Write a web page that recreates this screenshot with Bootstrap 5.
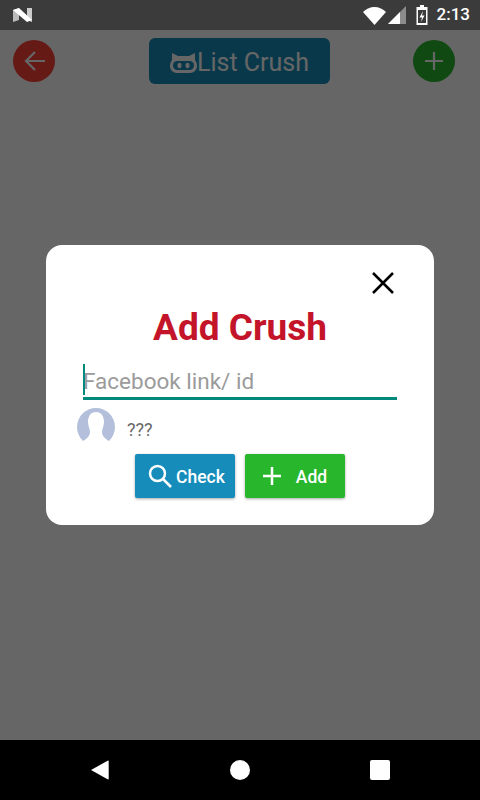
<!DOCTYPE html>
<html lang="en">
<head>
  <meta charset="UTF-8" />
  <meta name="viewport" content="width=device-width, initial-scale=1" />
  <title>Add Crush</title>
  <link href="https://cdn.jsdelivr.net/npm/bootstrap@5.3.0/dist/css/bootstrap.min.css" rel="stylesheet" />
  <style>
    html, body {
      height: 800px;
      overflow: hidden;
    }
    body {
      font-family: Roboto, "Liberation Sans", sans-serif;
      background: #000;
    }
    .status-strip {
      height: 30px;
      background: #3b3b3b;
      color: #fff;
      padding: 0 10px 0 13px;
      font-size: 17px;
      font-weight: 500;
    }
    .wifi-gap { margin-left: 2px; }
    .battery-gap { margin-left: 10px; }
    .clock-gap { margin-left: 9px; }
    .app-area {
      height: 710px;
      background: #fff;
    }
    .top-strip {
      padding: 8px 25px 0 13px;
    }
    .round-btn {
      width: 42px;
      height: 42px;
      margin-top: 2px;
      border-radius: 50%;
      border: 0;
      padding: 0;
    }
    .round-red { background: #ff4136; }
    .round-green { background: #28b62c; }
    .list-btn {
      width: 181px;
      height: 46px;
      margin-left: 11px;
      background: #158cba;
      color: #fff;
      font-size: 25px;
      border-radius: 6px;
      border: 0;
      padding: 3px 0 0;
    }
    .dim-layer {
      position: absolute;
      inset: 30px 0 60px 0;
      background: rgba(0, 0, 0, .6);
    }
    .crush-dialog {
      width: 388px;
      height: 280px;
      background: #fff;
      border-radius: 16px;
      padding: 27px 37px 0;
    }
    .close-mark {
      margin-right: 3px;
    }
    .crush-title {
      color: #c3142a;
      font-size: 37px;
      font-weight: 700;
      line-height: 42px;
      margin-top: 13px;
    }
    .crush-field {
      margin-top: 13px;
      height: 38px;
      border-bottom: 3px solid #00897b;
      font-size: 22.5px;
      line-height: 38px;
      color: #9b9b9b;
    }
    .caret-mark {
      width: 2px;
      height: 31px;
      background: #00897b;
      margin: 2px -2px 0 0;
      flex-shrink: 0;
    }
    .who-row {
      margin: 8px 0 0 -6px;
      height: 38px;
      color: #666;
      font-size: 18px;
      gap: 12px;
    }
    .who-name {
      padding-top: 4px;
    }
    .action-btn {
      width: 100px;
      height: 44px;
      border: 0;
      border-radius: 2px;
      color: #fff;
      font-size: 17.500px;
      font-weight: 500;
      padding: 0;
      box-shadow: 0 1px 3px rgba(0, 0, 0, .35);
    }
    .action-btn span {
      padding-top: 2px;
    }
    .action-blue { background: #158cba; padding-left: 3px; }
    .action-green { background: #28b62c; }
    .plus-gap { margin-right: 15px; }
    .action-gap {
      gap: 10px;
    }
    .nav-strip {
      height: 60px;
      background: #000;
      gap: 120px;
    }
  </style>
</head>
<body class="position-relative">
  <div class="status-strip d-flex align-items-center justify-content-between">
    <svg width="20" height="16" viewBox="0 0 20 16">
      <path d="M0 3l6-2v12l-6 2z" fill="#bbb"/>
      <path d="M14 1l5 0v14l-5-2z" fill="#ccc"/>
      <path d="M0 3l6-2 13 12-5 2z" fill="#fff"/>
    </svg>
    <div class="d-flex align-items-center">
      <svg width="23" height="19" viewBox="0 0 23 19">
        <path d="M0 6C3 3 7 1 11.500 1S20 3 23 6L11.500 19z" fill="#fff"/>
      </svg>
      <svg class="wifi-gap" width="18" height="18" viewBox="0 0 18 18">
        <path d="M0 18L18 0v18z" fill="#8c8c8c"/>
        <path d="M0 18L12 6v12z" fill="#fff"/>
      </svg>
      <svg class="battery-gap" width="12" height="20" viewBox="0 0 12 20">
        <path d="M4 0h4v2h3.500v18H.5V2H4z" fill="#fff"/>
        <path d="M2 5h8v13H2z" fill="#3b3b3b"/>
        <path d="M7 6L3.500 12.500H6L5 17l3.500-6.500H6z" fill="#fff"/>
      </svg>
      <span class="clock-gap">2:13</span>
    </div>
  </div>

  <div class="app-area">
    <div class="top-strip d-flex align-items-start justify-content-between">
      <button class="round-btn round-red d-flex align-items-center justify-content-center" type="button">
        <svg width="21" height="22" viewBox="0 0 21 22" fill="none" stroke="#fff" stroke-width="2.200">
          <path d="M21 11H2M11 2l-9 9 9 9"/>
        </svg>
      </button>
      <button class="list-btn d-flex align-items-center justify-content-center" type="button">
        <svg width="27" height="20" viewBox="0 0 27 20">
          <path d="M2 0l6 3h11l6-3v7c1 1.500 2 3 2 6 0 4-3 7-7 7H7c-4 0-7-3-7-7 0-3 1-4.500 2-6z" fill="#fff"/>
          <rect x="3" y="8" width="21" height="9" rx="4.500" fill="#158cba"/>
          <ellipse cx="9.500" cy="12.500" rx="2" ry="2.800" fill="#fff"/>
          <ellipse cx="17.500" cy="12.500" rx="2" ry="2.800" fill="#fff"/>
        </svg>
        <span>List Crush</span>
      </button>
      <button class="round-btn round-green d-flex align-items-center justify-content-center" type="button">
        <svg width="18" height="18" viewBox="0 0 18 18" fill="none" stroke="#fff" stroke-width="2.200">
          <path d="M9 0v18M0 9h18"/>
        </svg>
      </button>
    </div>
  </div>

  <div class="nav-strip d-flex align-items-center justify-content-center">
    <svg width="20" height="20" viewBox="0 0 20 20"><path d="M1 10L18 .5c.5 0 .7.300.7 1v17c0 .7-.2 1-.7 1z" fill="#fff"/></svg>
    <svg width="20" height="20" viewBox="0 0 20 20"><circle cx="10" cy="10" r="10" fill="#fff"/></svg>
    <svg width="20" height="20" viewBox="0 0 20 20"><rect width="20" height="20" rx="2" fill="#fff"/></svg>
  </div>

  <div class="dim-layer d-flex align-items-center justify-content-center">
    <div class="crush-dialog">
      <div class="d-flex justify-content-end">
        <svg class="close-mark" width="22" height="22" viewBox="0 0 22 22" fill="none" stroke="#000" stroke-width="2.500">
          <path d="M1 1l20 20M21 1L1 21"/>
        </svg>
      </div>
      <div class="crush-title text-center">Add Crush</div>
      <div class="crush-field d-flex">
        <span class="caret-mark"></span>
        <span>Facebook link/ id</span>
      </div>
      <div class="who-row d-flex align-items-center">
        <svg width="38" height="38" viewBox="0 0 38 38">
          <circle cx="19" cy="19" r="19" fill="#b3bfdb"/>
          <path d="M19 4c5 0 8 4 8 10 0 4-2 7-2 10 0 3 2 6 7 9v5H6v-5c5-3 7-6 7-9 0-3-2-6-2-10 0-6 3-10 8-10z" fill="#fff"/>
        </svg>
        <span class="who-name">???</span>
      </div>
      <div class="d-flex justify-content-center action-gap mt-2">
        <button class="action-btn action-blue d-flex align-items-center justify-content-center" type="button">
          <svg class="me-1" width="24" height="24" viewBox="0 0 24 24" fill="none" stroke="#fff" stroke-width="2.500">
            <circle cx="9.500" cy="9.500" r="7.500"/>
            <path d="M15 15l8 8"/>
          </svg>
          <span>Check</span>
        </button>
        <button class="action-btn action-green d-flex align-items-center justify-content-center" type="button">
          <svg class="plus-gap" width="18" height="18" viewBox="0 0 18 18" fill="none" stroke="#fff" stroke-width="2.500">
            <path d="M9 0v18M0 9h18"/>
          </svg>
          <span>Add</span>
        </button>
      </div>
    </div>
  </div>

  <script src="https://cdn.jsdelivr.net/npm/bootstrap@5.3.0/dist/js/bootstrap.bundle.min.js"></script>
</body>
</html>
